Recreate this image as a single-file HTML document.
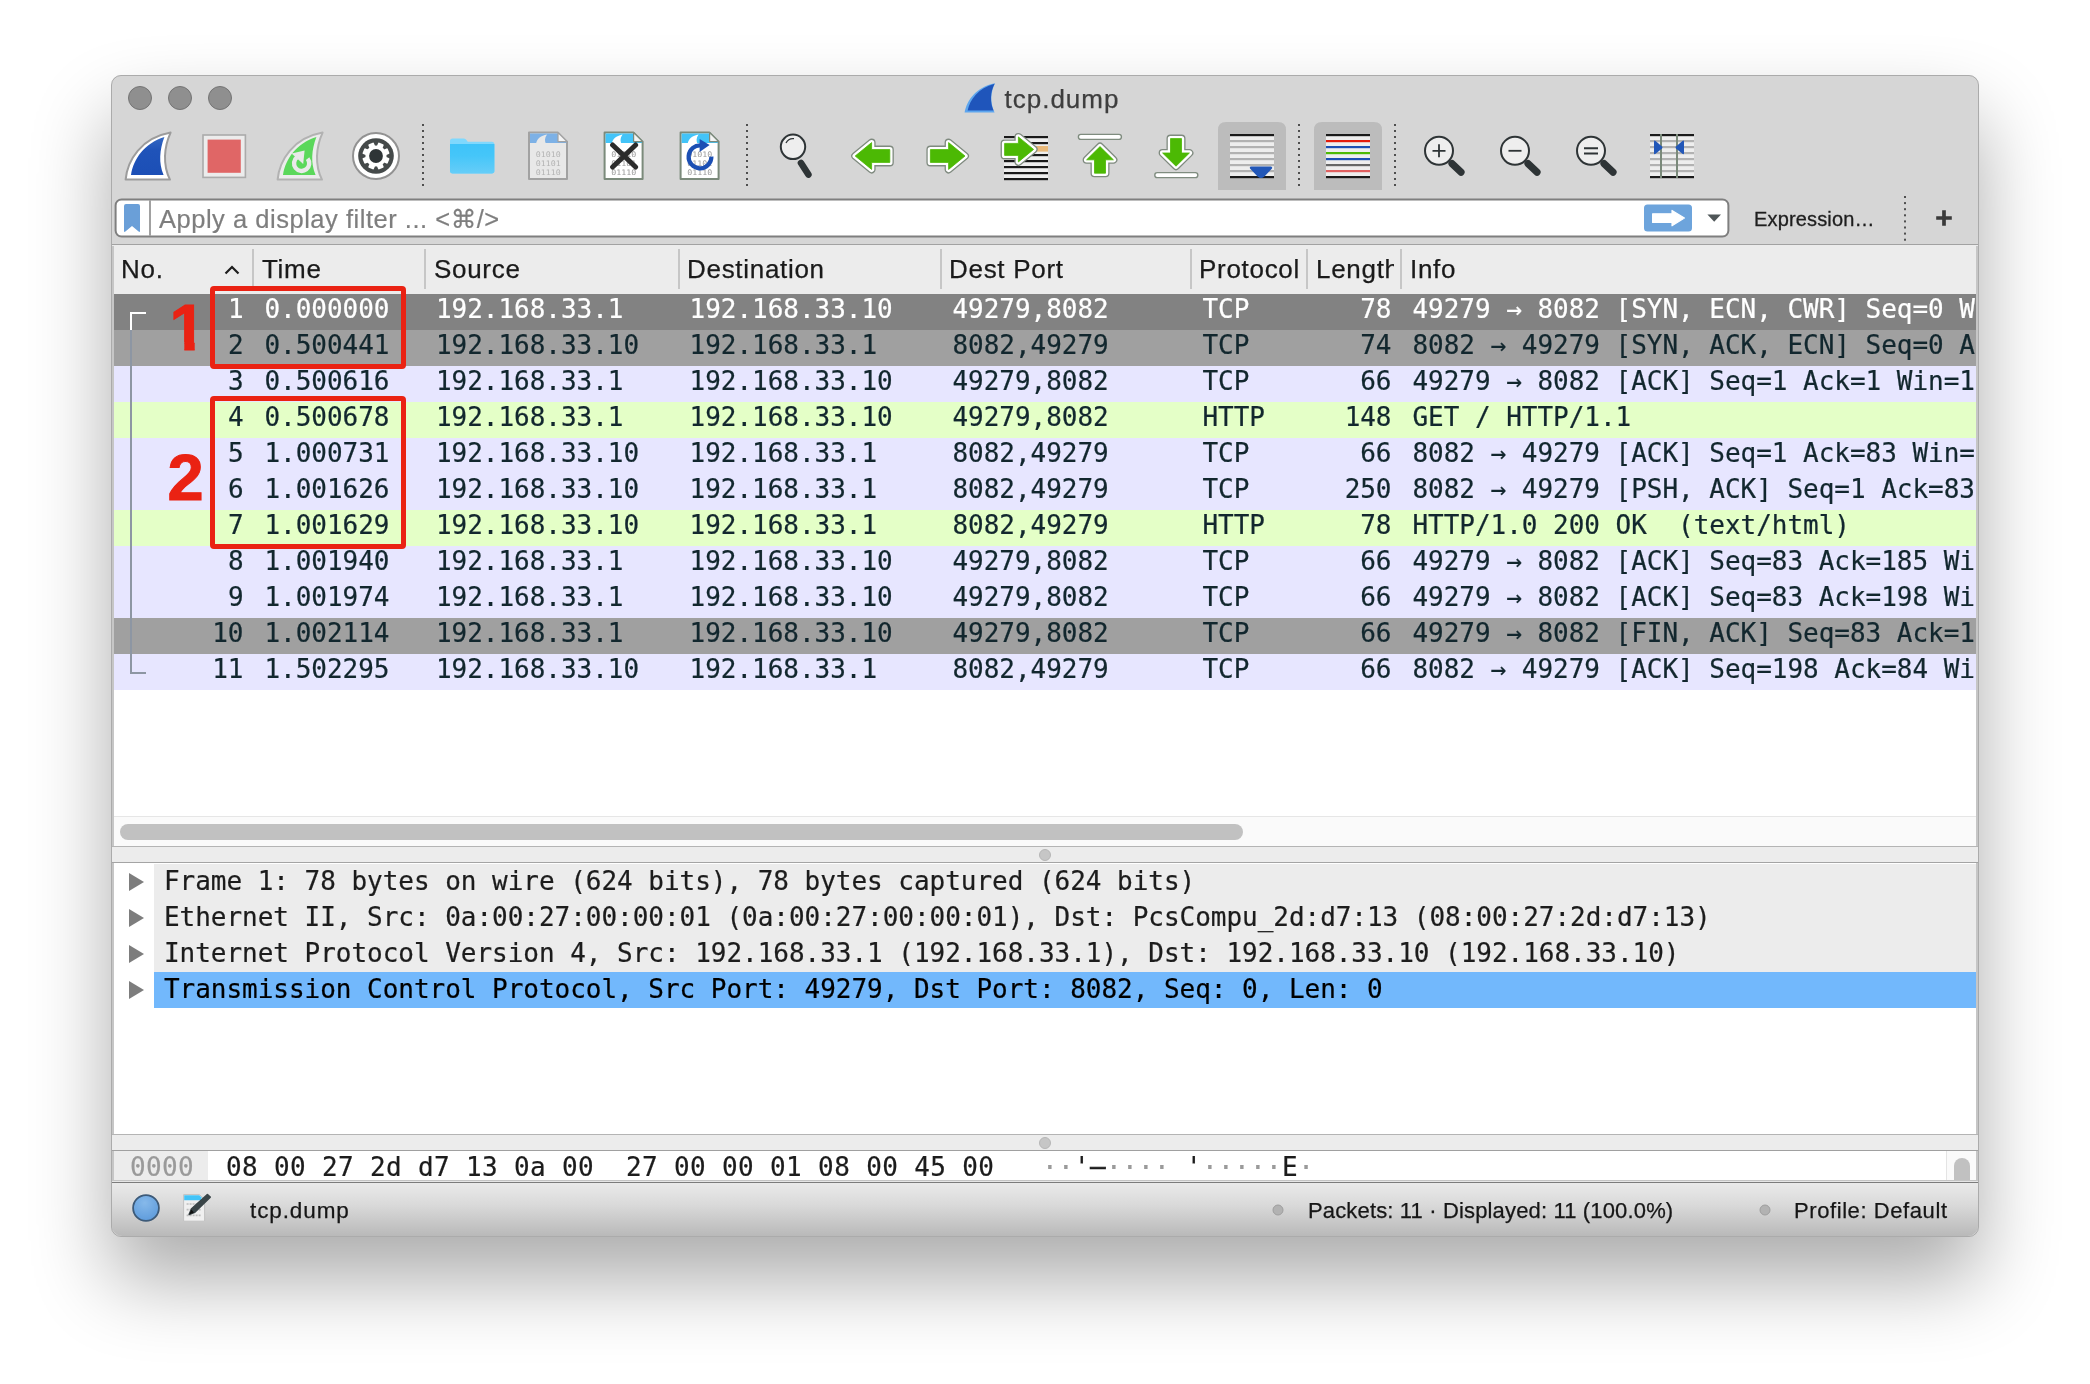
<!DOCTYPE html>
<html lang="en"><head><meta charset="utf-8"><title>tcp.dump</title>
<style>
html,body{margin:0;padding:0;}
body{width:2090px;height:1384px;overflow:hidden;background:#fff;position:relative;font-family:"Liberation Sans", "DejaVu Sans", sans-serif;}
.abs{position:absolute;}
#shadow{position:absolute;left:111px;top:75px;width:1868px;height:1162px;border-radius:10px;background:#d6d6d6;
  box-shadow:0 43px 80px rgba(0,0,0,0.33);}
#ring{position:absolute;left:111px;top:75px;width:1868px;height:1162px;border-radius:10px;border:1px solid rgba(0,0,0,0.2);box-sizing:border-box;pointer-events:none;}
#win{will-change:transform;position:absolute;left:112px;top:75px;width:1866px;height:1161px;border-radius:10px;overflow:hidden;background:#d6d6d6;}
.tl{position:absolute;top:11px;width:22px;height:22px;border-radius:50%;background:#8f8f8f;border:1px solid #747474;}
#title{position:absolute;left:892.5px;top:9px;font-size:26px;letter-spacing:1px;-webkit-text-stroke:0.25px;color:#3e3e3e;line-height:30px;white-space:nowrap;}
.mono{font-family:"DejaVu Sans Mono", "Liberation Mono", monospace;font-size:26px;white-space:pre;-webkit-text-stroke:0.22px;letter-spacing:-0.03px;}
.hdr{position:absolute;top:-1px;height:48px;line-height:48px;font-size:26px;letter-spacing:0.7px;-webkit-text-stroke:0.25px;color:#1a1a1a;white-space:nowrap;overflow:hidden;}
.vsep{position:absolute;top:3px;width:2px;height:40px;background:#c6c6c6;}
.row{position:absolute;left:2px;width:1862px;height:36px;line-height:31px;color:#12272e;overflow:hidden;}
.row span{position:absolute;top:0;}
.drow{position:absolute;left:42px;height:36px;line-height:34px;color:#111;}
.tri{position:absolute;left:15px;width:0;height:0;border-left:15px solid #7d7d7d;border-top:9px solid transparent;border-bottom:9px solid transparent;}
.sb{position:absolute;font-size:22px;letter-spacing:0.5px;-webkit-text-stroke:0.25px;color:#161616;white-space:nowrap;line-height:30px;}
.dot{position:absolute;width:12px;height:12px;border-radius:50%;background:#c6c6c6;border:1px solid #b6b6b6;box-sizing:border-box;}
</style></head>
<body>
<div id="shadow"></div>
<div id="win">
<div class="tl" style="left:16px"></div>
<div class="tl" style="left:56px"></div>
<div class="tl" style="left:96px"></div>
<svg class="abs" style="left:0;top:0" width="1866" height="245" viewBox="112 75 1866 245"><path d="M964.6,112.6 C967,100 976,87 995,83.2 C990.5,92 990,103 994.6,112.6 Z" fill="#5ea6ee"/><path d="M967.6,110.6 C970,99.5 978,88.5 994.6,83.8 C990.2,92 989.8,102 993.6,110.6 Z" fill="#1f55bb"/><defs><linearGradient id="gb" x1="0" y1="0" x2="0" y2="1"><stop offset="0" stop-color="#3468c2"/><stop offset="0.35" stop-color="#1f53b9"/><stop offset="1" stop-color="#1c4fb6"/></linearGradient></defs><g transform="translate(0,0)"><path d="M125.6,179.6 C127.5,160 141,138 170.6,132.6 C164,147 162.5,165 170,179.6 Z" fill="#fff" stroke="#9c9c9c" stroke-width="2" stroke-linejoin="round"/><path d="M131,175 C133.5,159 144,143.5 164.4,137 C159.5,150 158.5,163 163.6,175 Z" fill="url(#gb)"/></g><rect x="203" y="135" width="42.4" height="42.4" fill="#ececec" stroke="#ababab" stroke-width="1.6"/><rect x="207.6" y="139.6" width="33.2" height="33.2" fill="#e06666"/><g transform="translate(152,0)"><path d="M125.6,179.6 C127.5,160 141,138 170.6,132.6 C164,147 162.5,165 170,179.6 Z" fill="#ececec" stroke="#b2b2b2" stroke-width="2" stroke-linejoin="round"/><path d="M131,175 C133.5,159 144,143.5 164.4,137 C159.5,150 158.5,163 163.6,175 Z" fill="#5bd85b"/></g><g fill="none" stroke="#e9e9e9"><path d="M307.6,158.6 A7.6,7.6 0 1 1 297,157.3" stroke-width="4.4"/></g><path d="M291.6,153.6 L304.6,150.4 L303.2,164 Z" fill="#e9e9e9"/><circle cx="376" cy="156" r="23" fill="#fff" stroke="#929292" stroke-width="2"/><circle cx="376" cy="156" r="17.8" fill="#454a4a"/><g transform="translate(376,156)" fill="#fff"><rect x="-3" y="-13.6" width="6" height="6" rx="1" transform="rotate(22.5)"/><rect x="-3" y="-13.6" width="6" height="6" rx="1" transform="rotate(67.5)"/><rect x="-3" y="-13.6" width="6" height="6" rx="1" transform="rotate(112.5)"/><rect x="-3" y="-13.6" width="6" height="6" rx="1" transform="rotate(157.5)"/><rect x="-3" y="-13.6" width="6" height="6" rx="1" transform="rotate(202.5)"/><rect x="-3" y="-13.6" width="6" height="6" rx="1" transform="rotate(247.5)"/><rect x="-3" y="-13.6" width="6" height="6" rx="1" transform="rotate(292.5)"/><rect x="-3" y="-13.6" width="6" height="6" rx="1" transform="rotate(337.5)"/><circle r="10.6"/></g><circle cx="376" cy="156" r="6.9" fill="#2e3436"/><rect x="422" y="124" width="2" height="2" fill="#4f4f4f"/><rect x="422" y="130" width="2" height="2" fill="#4f4f4f"/><rect x="422" y="136" width="2" height="2" fill="#4f4f4f"/><rect x="422" y="142" width="2" height="2" fill="#4f4f4f"/><rect x="422" y="148" width="2" height="2" fill="#4f4f4f"/><rect x="422" y="154" width="2" height="2" fill="#4f4f4f"/><rect x="422" y="160" width="2" height="2" fill="#4f4f4f"/><rect x="422" y="166" width="2" height="2" fill="#4f4f4f"/><rect x="422" y="172" width="2" height="2" fill="#4f4f4f"/><rect x="422" y="178" width="2" height="2" fill="#4f4f4f"/><rect x="422" y="184" width="2" height="2" fill="#4f4f4f"/><path d="M450,141 q0,-2.6 2.6,-2.6 h11 q1.4,0 2.4,1.2 l1.8,2.2 h24 q2.6,0 2.6,2.6 v26.4 q0,2.6 -2.6,2.6 h-39.2 q-2.6,0 -2.6,-2.6 Z" fill="#7fd8fd"/><defs><linearGradient id="gf" x1="0" y1="0" x2="0" y2="1"><stop offset="0" stop-color="#3fc3f9"/><stop offset="0.4" stop-color="#45c6f9"/><stop offset="1" stop-color="#66cdf8"/></linearGradient></defs><path d="M450,144 h44.4 v26.8 q0,2.6 -2.6,2.6 h-39.2 q-2.6,0 -2.6,-2.6 Z" fill="url(#gf)"/><path d="M529,132.6 h29 l9,9 v37.4 h-38 Z" fill="#e8e8e8" stroke="#a2a2a2" stroke-width="2" stroke-linejoin="round"/><path d="M530,133.6 h28.4 l8,8 v1.5 h-36.4 Z" fill="#7db1e6"/><path d="M536,144.1 C537,138.6 541,135.6 547,134.6 C544.5,138.1 544.5,141.1 546,144.1 Z" fill="#e8e8e8"/><path d="M558,132.6 v9 h9 Z" fill="#f4f4f4" stroke="#a2a2a2" stroke-width="1.2" stroke-linejoin="round"/><text x="548.2" y="157.3" font-family="'DejaVu Sans Mono', 'Liberation Mono', monospace" font-size="7.6" text-anchor="middle" fill="#b4b4b4" fill-opacity="1.0" textLength="25" lengthAdjust="spacingAndGlyphs">01010</text><text x="548.2" y="166.20000000000002" font-family="'DejaVu Sans Mono', 'Liberation Mono', monospace" font-size="7.6" text-anchor="middle" fill="#b4b4b4" fill-opacity="1.0" textLength="25" lengthAdjust="spacingAndGlyphs">01101</text><text x="548.2" y="175.10000000000002" font-family="'DejaVu Sans Mono', 'Liberation Mono', monospace" font-size="7.6" text-anchor="middle" fill="#b4b4b4" fill-opacity="1.0" textLength="25" lengthAdjust="spacingAndGlyphs">01110</text><path d="M604.6,132.6 h29 l9,9 v37.4 h-38 Z" fill="#ffffff" stroke="#7b8a7b" stroke-width="2" stroke-linejoin="round"/><path d="M605.6,133.6 h28.4 l8,8 v1.5 h-36.4 Z" fill="#43c4f8"/><path d="M611.6,144.1 C612.6,138.6 616.6,135.6 622.6,134.6 C620.1,138.1 620.1,141.1 621.6,144.1 Z" fill="#ffffff"/><path d="M633.6,132.6 v9 h9 Z" fill="#f4f4f4" stroke="#7b8a7b" stroke-width="1.2" stroke-linejoin="round"/><text x="623.8000000000001" y="157.3" font-family="'DejaVu Sans Mono', 'Liberation Mono', monospace" font-size="7.6" text-anchor="middle" fill="#9a9a9a" fill-opacity="1.0" textLength="25" lengthAdjust="spacingAndGlyphs">01010</text><text x="623.8000000000001" y="166.20000000000002" font-family="'DejaVu Sans Mono', 'Liberation Mono', monospace" font-size="7.6" text-anchor="middle" fill="#9a9a9a" fill-opacity="1.0" textLength="25" lengthAdjust="spacingAndGlyphs">01101</text><text x="623.8000000000001" y="175.10000000000002" font-family="'DejaVu Sans Mono', 'Liberation Mono', monospace" font-size="7.6" text-anchor="middle" fill="#9a9a9a" fill-opacity="1.0" textLength="25" lengthAdjust="spacingAndGlyphs">01110</text><path d="M612.6,145 L635.6,167 M635.6,145 L612.6,167" stroke="#2b2b2b" stroke-width="5" stroke-linecap="round" fill="none"/><path d="M680.6,132.6 h29 l9,9 v37.4 h-38 Z" fill="#ffffff" stroke="#7b8a7b" stroke-width="2" stroke-linejoin="round"/><path d="M681.6,133.6 h28.4 l8,8 v1.5 h-36.4 Z" fill="#43c4f8"/><path d="M687.6,144.1 C688.6,138.6 692.6,135.6 698.6,134.6 C696.1,138.1 696.1,141.1 697.6,144.1 Z" fill="#ffffff"/><path d="M709.6,132.6 v9 h9 Z" fill="#f4f4f4" stroke="#7b8a7b" stroke-width="1.2" stroke-linejoin="round"/><text x="699.8000000000001" y="157.3" font-family="'DejaVu Sans Mono', 'Liberation Mono', monospace" font-size="7.6" text-anchor="middle" fill="#9a9a9a" fill-opacity="1.0" textLength="25" lengthAdjust="spacingAndGlyphs">01010</text><text x="699.8000000000001" y="166.20000000000002" font-family="'DejaVu Sans Mono', 'Liberation Mono', monospace" font-size="7.6" text-anchor="middle" fill="#9a9a9a" fill-opacity="1.0" textLength="25" lengthAdjust="spacingAndGlyphs">01101</text><text x="699.8000000000001" y="175.10000000000002" font-family="'DejaVu Sans Mono', 'Liberation Mono', monospace" font-size="7.6" text-anchor="middle" fill="#9a9a9a" fill-opacity="1.0" textLength="25" lengthAdjust="spacingAndGlyphs">01110</text><path d="M711.4,156.6 A11.4,11.4 0 1 1 701.6,145.6" stroke="#1b4fb4" stroke-width="4.2" fill="none"/><path d="M699.6,139 L709.6,145 L699.6,152 Z" fill="#1b4fb4"/><rect x="746" y="124" width="2" height="2" fill="#4f4f4f"/><rect x="746" y="130" width="2" height="2" fill="#4f4f4f"/><rect x="746" y="136" width="2" height="2" fill="#4f4f4f"/><rect x="746" y="142" width="2" height="2" fill="#4f4f4f"/><rect x="746" y="148" width="2" height="2" fill="#4f4f4f"/><rect x="746" y="154" width="2" height="2" fill="#4f4f4f"/><rect x="746" y="160" width="2" height="2" fill="#4f4f4f"/><rect x="746" y="166" width="2" height="2" fill="#4f4f4f"/><rect x="746" y="172" width="2" height="2" fill="#4f4f4f"/><rect x="746" y="178" width="2" height="2" fill="#4f4f4f"/><rect x="746" y="184" width="2" height="2" fill="#4f4f4f"/><line x1="801" y1="163" x2="808.4" y2="174.6" stroke="#2e3436" stroke-width="6.6" stroke-linecap="round"/><circle cx="793" cy="146.8" r="12.2" fill="#eeeeee" stroke="#2e3436" stroke-width="2"/><path d="M786,143 A8,8 0 0 1 794,138.6" stroke="#2e3436" stroke-width="1.3" fill="none"/><polygon points="889.8,149.6 871.6,149.6 871.6,142.6 855.2,156.0 871.6,169.4 871.6,162.4 889.8,162.4" fill="#7f8a7f" stroke="#7f8a7f" stroke-width="8" stroke-linejoin="round"/><polygon points="889.8,149.6 871.6,149.6 871.6,142.6 855.2,156.0 871.6,169.4 871.6,162.4 889.8,162.4" fill="#fff" stroke="#fff" stroke-width="5.4" stroke-linejoin="round"/><polygon points="889.8,149.6 871.6,149.6 871.6,142.6 855.2,156.0 871.6,169.4 871.6,162.4 889.8,162.4" fill="#4cb904" stroke="#4cb904" stroke-width="0.8" stroke-linejoin="round"/><polygon points="930.4,149.6 948.6,149.6 948.6,142.6 965.0,156.0 948.6,169.4 948.6,162.4 930.4,162.4" fill="#7f8a7f" stroke="#7f8a7f" stroke-width="8" stroke-linejoin="round"/><polygon points="930.4,149.6 948.6,149.6 948.6,142.6 965.0,156.0 948.6,169.4 948.6,162.4 930.4,162.4" fill="#fff" stroke="#fff" stroke-width="5.4" stroke-linejoin="round"/><polygon points="930.4,149.6 948.6,149.6 948.6,142.6 965.0,156.0 948.6,169.4 948.6,162.4 930.4,162.4" fill="#4cb904" stroke="#4cb904" stroke-width="0.8" stroke-linejoin="round"/><rect x="1004" y="136" width="44" height="44" fill="#eeeeee"/><rect x="1004" y="136" width="44" height="2.2" fill="#1a1a1a"/><rect x="1004" y="142" width="44" height="2.2" fill="#1a1a1a"/><rect x="1004" y="148" width="44" height="2.2" fill="#1a1a1a"/><rect x="1004" y="154" width="44" height="2.2" fill="#1a1a1a"/><rect x="1004" y="160" width="44" height="2.2" fill="#1a1a1a"/><rect x="1004" y="166" width="44" height="2.2" fill="#1a1a1a"/><rect x="1004" y="172" width="44" height="2.2" fill="#1a1a1a"/><rect x="1004" y="178" width="44" height="2.2" fill="#1a1a1a"/><rect x="1036" y="146" width="12" height="5.6" fill="#e9b97a"/><polygon points="1004.6,143.4 1018.4,143.4 1018.4,136.9 1033.6,149.4 1018.4,161.9 1018.4,155.4 1004.6,155.4" fill="#7f8a7f" stroke="#7f8a7f" stroke-width="8" stroke-linejoin="round"/><polygon points="1004.6,143.4 1018.4,143.4 1018.4,136.9 1033.6,149.4 1018.4,161.9 1018.4,155.4 1004.6,155.4" fill="#fff" stroke="#fff" stroke-width="5.4" stroke-linejoin="round"/><polygon points="1004.6,143.4 1018.4,143.4 1018.4,136.9 1033.6,149.4 1018.4,161.9 1018.4,155.4 1004.6,155.4" fill="#4cb904" stroke="#4cb904" stroke-width="0.8" stroke-linejoin="round"/><rect x="1078.4" y="134.4" width="43" height="5" rx="2.4" fill="#fff" stroke="#7f8c7f" stroke-width="1.4"/><polygon points="1100.0,146.6 1113.4,159.8 1105.5,159.8 1105.5,173.2 1094.5,173.2 1094.5,159.8 1086.6,159.8" fill="#7f8a7f" stroke="#7f8a7f" stroke-width="8" stroke-linejoin="round"/><polygon points="1100.0,146.6 1113.4,159.8 1105.5,159.8 1105.5,173.2 1094.5,173.2 1094.5,159.8 1086.6,159.8" fill="#fff" stroke="#fff" stroke-width="5.4" stroke-linejoin="round"/><polygon points="1100.0,146.6 1113.4,159.8 1105.5,159.8 1105.5,173.2 1094.5,173.2 1094.5,159.8 1086.6,159.8" fill="#4cb904" stroke="#4cb904" stroke-width="0.8" stroke-linejoin="round"/><rect x="1154.8" y="172.6" width="43" height="5" rx="2.4" fill="#fff" stroke="#7f8c7f" stroke-width="1.4"/><polygon points="1176.0,166.2 1189.4,153.0 1181.5,153.0 1181.5,138.6 1170.5,138.6 1170.5,153.0 1162.6,153.0" fill="#7f8a7f" stroke="#7f8a7f" stroke-width="8" stroke-linejoin="round"/><polygon points="1176.0,166.2 1189.4,153.0 1181.5,153.0 1181.5,138.6 1170.5,138.6 1170.5,153.0 1162.6,153.0" fill="#fff" stroke="#fff" stroke-width="5.4" stroke-linejoin="round"/><polygon points="1176.0,166.2 1189.4,153.0 1181.5,153.0 1181.5,138.6 1170.5,138.6 1170.5,153.0 1162.6,153.0" fill="#4cb904" stroke="#4cb904" stroke-width="0.8" stroke-linejoin="round"/><path d="M1218,190 v-60 q0,-8 8,-8 h52 q8,0 8,8 v60 Z" fill="#bcbcbc"/><rect x="1230" y="134" width="44" height="44" fill="#eeeeee"/><rect x="1230" y="134" width="44" height="2.2" fill="#1a1a1a"/><rect x="1230" y="140" width="44" height="2.2" fill="#b2b2b2"/><rect x="1230" y="146" width="44" height="2.2" fill="#b2b2b2"/><rect x="1230" y="152" width="44" height="2.2" fill="#b2b2b2"/><rect x="1230" y="158" width="44" height="2.2" fill="#b2b2b2"/><rect x="1230" y="164" width="44" height="2.2" fill="#b2b2b2"/><rect x="1230" y="170" width="44" height="2.2" fill="#b2b2b2"/><rect x="1230" y="176" width="44" height="2.2" fill="#1a1a1a"/><path d="M1251,166.4 h20 q2,0.6 0.8,2.4 l-7.6,8 q-3.2,2.4 -6.4,0 l-7.6,-8 q-1.2,-1.8 0.8,-2.4 Z" fill="#2257b8"/><rect x="1298" y="124" width="2" height="2" fill="#4f4f4f"/><rect x="1298" y="130" width="2" height="2" fill="#4f4f4f"/><rect x="1298" y="136" width="2" height="2" fill="#4f4f4f"/><rect x="1298" y="142" width="2" height="2" fill="#4f4f4f"/><rect x="1298" y="148" width="2" height="2" fill="#4f4f4f"/><rect x="1298" y="154" width="2" height="2" fill="#4f4f4f"/><rect x="1298" y="160" width="2" height="2" fill="#4f4f4f"/><rect x="1298" y="166" width="2" height="2" fill="#4f4f4f"/><rect x="1298" y="172" width="2" height="2" fill="#4f4f4f"/><rect x="1298" y="178" width="2" height="2" fill="#4f4f4f"/><rect x="1298" y="184" width="2" height="2" fill="#4f4f4f"/><path d="M1314,190 v-60 q0,-8 8,-8 h52 q8,0 8,8 v60 Z" fill="#bcbcbc"/><rect x="1326" y="134" width="44" height="44" fill="#eeeeee"/><rect x="1326" y="134" width="44" height="2.2" fill="#1a1a1a"/><rect x="1326" y="140" width="44" height="2.2" fill="#e31b0c"/><rect x="1326" y="146" width="44" height="2.2" fill="#1b4fb4"/><rect x="1326" y="152" width="44" height="2.2" fill="#4cb904"/><rect x="1326" y="158" width="44" height="2.2" fill="#1b4fb4"/><rect x="1326" y="164" width="44" height="2.2" fill="#666"/><rect x="1326" y="170" width="44" height="2.2" fill="#e06060"/><rect x="1326" y="176" width="44" height="2.2" fill="#1a1a1a"/><rect x="1394" y="124" width="2" height="2" fill="#4f4f4f"/><rect x="1394" y="130" width="2" height="2" fill="#4f4f4f"/><rect x="1394" y="136" width="2" height="2" fill="#4f4f4f"/><rect x="1394" y="142" width="2" height="2" fill="#4f4f4f"/><rect x="1394" y="148" width="2" height="2" fill="#4f4f4f"/><rect x="1394" y="154" width="2" height="2" fill="#4f4f4f"/><rect x="1394" y="160" width="2" height="2" fill="#4f4f4f"/><rect x="1394" y="166" width="2" height="2" fill="#4f4f4f"/><rect x="1394" y="172" width="2" height="2" fill="#4f4f4f"/><rect x="1394" y="178" width="2" height="2" fill="#4f4f4f"/><rect x="1394" y="184" width="2" height="2" fill="#4f4f4f"/><line x1="1452" y1="163.6" x2="1461" y2="172.2" stroke="#2e3436" stroke-width="7.2" stroke-linecap="round"/><circle cx="1439" cy="150.8" r="14" fill="#eeeeee" stroke="#2e3436" stroke-width="2"/><path d="M1432.5,150.8 h13 M1439,144.3 v13" stroke="#2e3436" stroke-width="1.8" fill="none"/><line x1="1528" y1="163.6" x2="1537" y2="172.2" stroke="#2e3436" stroke-width="7.2" stroke-linecap="round"/><circle cx="1515" cy="150.8" r="14" fill="#eeeeee" stroke="#2e3436" stroke-width="2"/><path d="M1508.5,150.8 h13" stroke="#2e3436" stroke-width="1.8" fill="none"/><line x1="1604" y1="163.6" x2="1613" y2="172.2" stroke="#2e3436" stroke-width="7.2" stroke-linecap="round"/><circle cx="1591" cy="150.8" r="14" fill="#eeeeee" stroke="#2e3436" stroke-width="2"/><path d="M1584,148.20000000000002 h14 M1584,153.4 h14" stroke="#2e3436" stroke-width="2" fill="none"/><rect x="1650" y="134" width="44" height="44" fill="#eeeeee"/><rect x="1650" y="134" width="44" height="2.2" fill="#1a1a1a"/><rect x="1650" y="140" width="44" height="2.2" fill="#b2b2b2"/><rect x="1650" y="146" width="44" height="2.2" fill="#b2b2b2"/><rect x="1650" y="152" width="44" height="2.2" fill="#b2b2b2"/><rect x="1650" y="158" width="44" height="2.2" fill="#b2b2b2"/><rect x="1650" y="164" width="44" height="2.2" fill="#b2b2b2"/><rect x="1650" y="170" width="44" height="2.2" fill="#b2b2b2"/><rect x="1650" y="176" width="44" height="2.2" fill="#1a1a1a"/><rect x="1660" y="134" width="2" height="44" fill="#7b8a7b"/><rect x="1676" y="134" width="2" height="44" fill="#7b8a7b"/><path d="M1654,141.6 q0,-1.6 1.6,-0.6 l6.4,5.4 q1,1 0,2 l-6.4,5.4 q-1.6,1 -1.6,-0.6 Z" fill="#2257b8"/><path d="M1684,141.6 q0,-1.6 -1.6,-0.6 l-6.4,5.4 q-1,1 0,2 l6.4,5.4 q1.6,1 1.6,-0.6 Z" fill="#2257b8"/><rect x="115.6" y="199.4" width="1612.8" height="37.2" rx="6" fill="#fff" stroke="#7f7f7f" stroke-width="2"/><rect x="149.2" y="200.4" width="1.6" height="35.2" fill="#8a8a8a"/><path d="M124,206 q0,-2 2,-2 h12 q2,0 2,2 v25 q0,1.6 -1.4,0.6 l-6.6,-5.6 l-6.6,5.6 q-1.4,1 -1.4,-0.6 Z" fill="#6a9fd8"/><rect x="1644" y="204.6" width="48" height="27" rx="3.5" fill="#6da4dc"/><path d="M1652.6,213.8 h19.4 v-3.4 l12.4,7.7 l-12.4,7.7 v-3.4 h-19.4 Z" fill="#fff" stroke="#fff" stroke-width="1.2" stroke-linejoin="round"/><path d="M1707.4,214.6 h13.6 l-6.8,7.2 Z" fill="#4f5658"/><path d="M1936.2,218 h15.6 M1944,210.2 v15.6" stroke="#3a3a3a" stroke-width="3.7" fill="none"/><rect x="1904" y="196.0" width="2" height="2" fill="#4f4f4f"/><rect x="1904" y="202.1" width="2" height="2" fill="#4f4f4f"/><rect x="1904" y="208.2" width="2" height="2" fill="#4f4f4f"/><rect x="1904" y="214.3" width="2" height="2" fill="#4f4f4f"/><rect x="1904" y="220.4" width="2" height="2" fill="#4f4f4f"/><rect x="1904" y="226.5" width="2" height="2" fill="#4f4f4f"/><rect x="1904" y="232.6" width="2" height="2" fill="#4f4f4f"/><rect x="1904" y="238.7" width="2" height="2" fill="#4f4f4f"/></svg>
<div id="title">tcp.dump</div>
<!--TOOLBAR-->
<div class="abs" style="left:47px;top:129px;font-size:25.5px;line-height:30px;color:#7e7e7e;white-space:nowrap;letter-spacing:0.52px;-webkit-text-stroke:0.2px">Apply a display filter ... &lt;⌘/&gt;</div>
<div class="abs" style="left:1642px;top:130px;font-size:20px;line-height:28px;color:#1e1e1e;white-space:nowrap;letter-spacing:0.15px;-webkit-text-stroke:0.3px">Expression…</div>
<div class="abs" style="left:0;top:169px;width:1866px;height:1px;background:#a2a2a2"></div>
<div class="abs" style="left:0;top:170px;width:1866px;height:1px;background:#ececec"></div>
<div class="abs" id="plist" style="left:0;top:171px;width:1866px;height:600px;background:#fff;overflow:hidden">
<div class="abs" style="left:0;top:0;width:1866px;height:48px;background:#ececec"></div>
<div class="hdr" style="left:9px">No.</div>
<div class="hdr" style="left:150px">Time</div>
<div class="hdr" style="left:322px">Source</div>
<div class="hdr" style="left:575px">Destination</div>
<div class="hdr" style="left:837px">Dest Port</div>
<div class="hdr" style="left:1087px">Protocol</div>
<div class="hdr" style="left:1204px;width:78px">Length</div>
<div class="hdr" style="left:1298px">Info</div>
<div class="vsep" style="left:140px"></div>
<div class="vsep" style="left:312px"></div>
<div class="vsep" style="left:566px"></div>
<div class="vsep" style="left:828px"></div>
<div class="vsep" style="left:1078px"></div>
<div class="vsep" style="left:1194px"></div>
<div class="vsep" style="left:1288px"></div>
<svg class="abs" style="left:112px;top:19px" width="16" height="10" viewBox="0 0 16 10"><path d="M1.5 8.5 L8 2 L14.5 8.5" fill="none" stroke="#1e1e1e" stroke-width="2.2"/></svg>
<div class="row mono" style="top:48px;background:#828282;color:#fff"><span style="right:1732.5px">1</span><span style="left:150.5px">0.000000</span><span style="left:322px">192.168.33.1</span><span style="left:575.6px">192.168.33.10</span><span style="left:838.5px">49279,8082</span><span style="left:1088.5px">TCP</span><span style="right:584.5px">78</span><span style="left:1298.5px">49279 → 8082 [SYN, ECN, CWR] Seq=0 Win=65535</span></div>
<div class="row mono" style="top:84px;background:#a0a0a0;color:#12272e"><span style="right:1732.5px">2</span><span style="left:150.5px">0.500441</span><span style="left:322px">192.168.33.10</span><span style="left:575.6px">192.168.33.1</span><span style="left:838.5px">8082,49279</span><span style="left:1088.5px">TCP</span><span style="right:584.5px">74</span><span style="left:1298.5px">8082 → 49279 [SYN, ACK, ECN] Seq=0 Ack=1</span></div>
<div class="row mono" style="top:120px;background:#e7e6ff;color:#12272e"><span style="right:1732.5px">3</span><span style="left:150.5px">0.500616</span><span style="left:322px">192.168.33.1</span><span style="left:575.6px">192.168.33.10</span><span style="left:838.5px">49279,8082</span><span style="left:1088.5px">TCP</span><span style="right:584.5px">66</span><span style="left:1298.5px">49279 → 8082 [ACK] Seq=1 Ack=1 Win=131744</span></div>
<div class="row mono" style="top:156px;background:#e4ffc7;color:#12272e"><span style="right:1732.5px">4</span><span style="left:150.5px">0.500678</span><span style="left:322px">192.168.33.1</span><span style="left:575.6px">192.168.33.10</span><span style="left:838.5px">49279,8082</span><span style="left:1088.5px">HTTP</span><span style="right:584.5px">148</span><span style="left:1298.5px">GET / HTTP/1.1 </span></div>
<div class="row mono" style="top:192px;background:#e7e6ff;color:#12272e"><span style="right:1732.5px">5</span><span style="left:150.5px">1.000731</span><span style="left:322px">192.168.33.10</span><span style="left:575.6px">192.168.33.1</span><span style="left:838.5px">8082,49279</span><span style="left:1088.5px">TCP</span><span style="right:584.5px">66</span><span style="left:1298.5px">8082 → 49279 [ACK] Seq=1 Ack=83 Win=29056</span></div>
<div class="row mono" style="top:228px;background:#e7e6ff;color:#12272e"><span style="right:1732.5px">6</span><span style="left:150.5px">1.001626</span><span style="left:322px">192.168.33.10</span><span style="left:575.6px">192.168.33.1</span><span style="left:838.5px">8082,49279</span><span style="left:1088.5px">TCP</span><span style="right:584.5px">250</span><span style="left:1298.5px">8082 → 49279 [PSH, ACK] Seq=1 Ack=83 Win=29056</span></div>
<div class="row mono" style="top:264px;background:#e4ffc7;color:#12272e"><span style="right:1732.5px">7</span><span style="left:150.5px">1.001629</span><span style="left:322px">192.168.33.10</span><span style="left:575.6px">192.168.33.1</span><span style="left:838.5px">8082,49279</span><span style="left:1088.5px">HTTP</span><span style="right:584.5px">78</span><span style="left:1298.5px">HTTP/1.0 200 OK  (text/html)</span></div>
<div class="row mono" style="top:300px;background:#e7e6ff;color:#12272e"><span style="right:1732.5px">8</span><span style="left:150.5px">1.001940</span><span style="left:322px">192.168.33.1</span><span style="left:575.6px">192.168.33.10</span><span style="left:838.5px">49279,8082</span><span style="left:1088.5px">TCP</span><span style="right:584.5px">66</span><span style="left:1298.5px">49279 → 8082 [ACK] Seq=83 Ack=185 Win=131552</span></div>
<div class="row mono" style="top:336px;background:#e7e6ff;color:#12272e"><span style="right:1732.5px">9</span><span style="left:150.5px">1.001974</span><span style="left:322px">192.168.33.1</span><span style="left:575.6px">192.168.33.10</span><span style="left:838.5px">49279,8082</span><span style="left:1088.5px">TCP</span><span style="right:584.5px">66</span><span style="left:1298.5px">49279 → 8082 [ACK] Seq=83 Ack=198 Win=131552</span></div>
<div class="row mono" style="top:372px;background:#a0a0a0;color:#12272e"><span style="right:1732.5px">10</span><span style="left:150.5px">1.002114</span><span style="left:322px">192.168.33.1</span><span style="left:575.6px">192.168.33.10</span><span style="left:838.5px">49279,8082</span><span style="left:1088.5px">TCP</span><span style="right:584.5px">66</span><span style="left:1298.5px">49279 → 8082 [FIN, ACK] Seq=83 Ack=198 Win=131552</span></div>
<div class="row mono" style="top:408px;background:#e7e6ff;color:#12272e"><span style="right:1732.5px">11</span><span style="left:150.5px">1.502295</span><span style="left:322px">192.168.33.10</span><span style="left:575.6px">192.168.33.1</span><span style="left:838.5px">8082,49279</span><span style="left:1088.5px">TCP</span><span style="right:584.5px">66</span><span style="left:1298.5px">8082 → 49279 [ACK] Seq=198 Ack=84 Win=29056</span></div>
<div class="abs" style="left:18px;top:66px;width:16px;height:2px;background:#fff"></div>
<div class="abs" style="left:18px;top:66px;width:2px;height:18px;background:#fff"></div>
<div class="abs" style="left:18px;top:84px;width:2px;height:344px;background:#8d96a3"></div>
<div class="abs" style="left:18px;top:426px;width:16px;height:2px;background:#8d96a3"></div>
<div class="abs" style="left:2px;top:570px;width:1862px;height:1px;background:#e6e6e6"></div>
<div class="abs" style="left:2px;top:571px;width:1862px;height:29px;background:#fafafa"></div>
<div class="abs" style="left:8px;top:578px;width:1123px;height:16px;border-radius:8px;background:#c1c1c1"></div>
</div>
<div class="abs" style="left:0;top:171px;width:2px;height:937px;background:#c6c6c6"></div>
<div class="abs" style="left:1864px;top:171px;width:2px;height:937px;background:#c6c6c6"></div>
<div class="abs" style="left:0;top:771px;width:1866px;height:17px;background:#ececec;border-top:1px solid #b4b4b4;border-bottom:1px solid #a4a4a4;box-sizing:border-box"></div>
<div class="dot" style="left:927px;top:774px"></div>
<div class="abs" style="left:2px;top:788px;width:1862px;height:271px;background:#fff;overflow:hidden">
<div class="abs" style="left:40px;top:1px;width:1822px;height:36px;background:#ececec"></div>
<div class="tri" style="top:10px"></div>
<div class="drow mono" style="left:50px;top:1px;color:#1c1c1c">Frame 1: 78 bytes on wire (624 bits), 78 bytes captured (624 bits)</div>
<div class="abs" style="left:40px;top:37px;width:1822px;height:36px;background:#ececec"></div>
<div class="tri" style="top:46px"></div>
<div class="drow mono" style="left:50px;top:37px;color:#1c1c1c">Ethernet II, Src: 0a:00:27:00:00:01 (0a:00:27:00:00:01), Dst: PcsCompu_2d:d7:13 (08:00:27:2d:d7:13)</div>
<div class="abs" style="left:40px;top:73px;width:1822px;height:36px;background:#ececec"></div>
<div class="tri" style="top:82px"></div>
<div class="drow mono" style="left:50px;top:73px;color:#1c1c1c">Internet Protocol Version 4, Src: 192.168.33.1 (192.168.33.1), Dst: 192.168.33.10 (192.168.33.10)</div>
<div class="abs" style="left:40px;top:109px;width:1822px;height:36px;background:#72b8fc"></div>
<div class="tri" style="top:118px"></div>
<div class="drow mono" style="left:50px;top:109px;color:#000">Transmission Control Protocol, Src Port: 49279, Dst Port: 8082, Seq: 0, Len: 0</div>
</div>
<div class="abs" style="left:0;top:1059px;width:1866px;height:17px;background:#ececec;border-top:1px solid #b4b4b4;border-bottom:1px solid #a0a0a0;box-sizing:border-box"></div>
<div class="dot" style="left:927px;top:1062px"></div>
<div class="abs" style="left:2px;top:1076px;width:1862px;height:31px;background:#fff;overflow:hidden">
<div class="abs" style="left:0;top:0;width:94px;height:31px;background:#ececec"></div>
<div class="abs mono" style="left:16px;top:0;line-height:33px;color:#9a9a9a;letter-spacing:0.35px">0000</div>
<div class="abs mono" style="left:112px;top:0;line-height:33px;color:#1c1c1c;letter-spacing:0.35px">08 00 27 2d d7 13 0a 00  27 00 00 01 08 00 45 00</div>
<div class="abs mono" style="left:928px;top:0;line-height:33px;color:#1c1c1c;letter-spacing:0.35px"><span style="color:#9a9a9a">··</span>'<span style="position:relative;top:-1.5px;-webkit-text-stroke:0.6px">–</span><span style="color:#9a9a9a">····</span> '<span style="color:#9a9a9a">·····</span>E<span style="color:#9a9a9a">·</span></div>
<div class="abs" style="left:1832px;top:0;width:1px;height:31px;background:#e4e4e4"></div>
<div class="abs" style="left:1833px;top:0;width:29px;height:31px;background:#fafafa"></div>
<div class="abs" style="left:1840px;top:7px;width:16px;height:40px;border-radius:8px;background:#c1c1c1"></div>
</div>
<div class="abs" style="left:0;top:1105px;width:1866px;height:1px;background:#c4c4c4"></div>
<div class="abs" style="left:0;top:1106px;width:1866px;height:1px;background:#e6e6e6"></div>
<div class="abs" style="left:0;top:1107px;width:1866px;height:1px;background:#7c7c7c"></div>
<div class="abs" style="left:0;top:1108px;width:1866px;height:53px;background:linear-gradient(#eaeaea,#d9d9d9 42%,#b9b9b9)"></div>
<svg class="abs" style="left:0;top:1108px" width="1866" height="53" viewBox="112 1183 1866 53"><defs><radialGradient id="gc" cx="0.45" cy="0.3" r="0.7"><stop offset="0" stop-color="#86b9ea"/><stop offset="1" stop-color="#5f9cdc"/></radialGradient></defs><circle cx="146" cy="1208" r="12.9" fill="url(#gc)" stroke="#3d5a78" stroke-width="1.8"/><path d="M183.6,1194.6 h16 l5,5 v21.6 h-21 Z" fill="#f0f0f0" stroke="#c2c2c2" stroke-width="1"/><path d="M184.2,1195.2 h15.2 l2,2 v3 h-17.2 Z" fill="#43c4f8"/><path d="M186.6,1204 h12 M186.6,1209.6 h14 M186.6,1215.4 h14" stroke="#bdbdbd" stroke-width="1.6" stroke-dasharray="2 1"/><path d="M207.4,1194.6 l2.8,2.6 l-15.4,15 l-5.6,2.2 l2.4,-5.6 Z" fill="#3a4548" stroke="#3a4548" stroke-width="1.6" stroke-linejoin="round"/><path d="M189.2,1214.4 l2,-4.8 l2.8,2.8 Z" fill="#111"/><circle cx="1278" cy="1210" r="5" fill="#b2b2b2" stroke="#9e9e9e" stroke-width="1"/><circle cx="1765" cy="1210" r="5" fill="#b2b2b2" stroke="#9e9e9e" stroke-width="1"/></svg>
<div class="sb" style="left:138px;top:1121px;font-size:22.5px;letter-spacing:0.9px">tcp.dump</div>
<div class="sb" style="left:1196px;top:1121px;letter-spacing:0.15px">Packets: 11 · Displayed: 11 (100.0%)</div>
<div class="sb" style="left:1682px;top:1121px;letter-spacing:0.58px">Profile: Default</div>
</div>
<div id="ring"></div>
<div class="abs" style="left:210px;top:286px;width:196px;height:83px;border:5.5px solid #ea2213;border-radius:4px;box-sizing:border-box"></div>
<div class="abs" style="left:210px;top:396px;width:196px;height:153px;border:5.5px solid #ea2213;border-radius:4px;box-sizing:border-box"></div>
<div class="abs" style="left:169.5px;top:293px;width:40px;font-size:65px;font-weight:bold;color:#ea2213;-webkit-text-stroke:1px #ea2213;line-height:70px;clip-path:polygon(0 0,25.2px 0,25.2px 100%,14.8px 100%,14.8px 49px,0 49px)">1</div>
<div class="abs" style="left:167.5px;top:443px;font-size:65px;font-weight:bold;color:#ea2213;-webkit-text-stroke:1px #ea2213;line-height:70px">2</div>
</body></html>
